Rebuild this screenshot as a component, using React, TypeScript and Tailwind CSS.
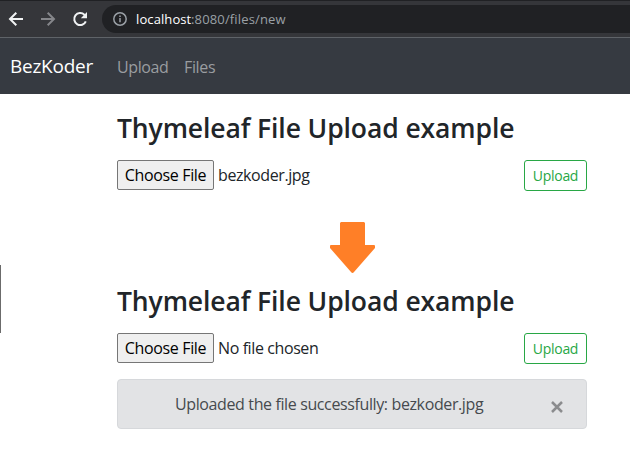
const sans = "font-['Open_Sans','Noto_Sans',sans-serif]";

function BrowserBar() {
  return (
    <div className="flex h-[38px] items-center border-t border-b border-t-[#202124] border-b-[#5f6368] bg-[#35363a]">
      <svg className="ml-2 h-4 w-4 shrink-0" viewBox="0 0 16 16" fill="none" stroke="#f1f3f4" strokeWidth="2">
        <path d="M15 8H2.500M8.300 1.700 2 8l6.300 6.300" />
      </svg>
      <svg className="ml-4 h-4 w-4 shrink-0" viewBox="0 0 16 16" fill="none" stroke="#85868a" strokeWidth="2">
        <path d="M1 8h12.500M7.700 1.700 14 8l-6.300 6.300" />
      </svg>
      <svg className="ml-4 h-4 w-4 shrink-0" viewBox="0 0 16 16" fill="none">
        <path d="M13.800 10.300A6 6 0 1 1 12.400 3.700L14 5.400" stroke="#f1f3f4" strokeWidth="2" />
        <path d="M15 1v6.200H8.800z" fill="#f1f3f4" />
      </svg>
      <div className="ml-[14px] flex h-7 flex-1 items-center rounded-l-full bg-[#202124] pl-[11px]">
        <svg className="h-[14px] w-[14px]" viewBox="0 0 14 14" fill="none" stroke="#9aa0a6" strokeWidth="1.5">
          <circle cx="7" cy="7" r="6.2" />
          <path d="M7 6v4.200M7 3.400v1.500" />
        </svg>
        <span className="ml-[9px] text-[13px] leading-7 whitespace-nowrap text-[#9aa0a6]">
          <span className="inline-block w-[55px] tracking-[0.1px] text-white">localhost</span>
          <span className="tracking-[0.15px]">:8080/files/new</span>
        </span>
      </div>
    </div>
  );
}

function NavBar() {
  return (
    <nav className="flex h-14 items-center bg-[#363a41] pl-[10px] whitespace-nowrap">
      <span className="w-[107px] pt-px text-[19px] tracking-[-0.25px] text-white">BezKoder</span>
      <span className="w-[67px] pt-px text-[16px] tracking-[-0.4px] text-[#9a9da0]">Upload</span>
      <span className="pt-px text-[16px] tracking-[-0.35px] text-[#9a9da0]">Files</span>
    </nav>
  );
}

function UploadForm({ file }: { file: string }) {
  return (
    <section className="whitespace-nowrap">
      <h3 className="h-[34px] text-[26.5px] leading-[34px] font-semibold tracking-[-0.1px] text-[#212529]">
        Thymeleaf File Upload example
      </h3>
      <div className="mt-[15px] flex h-[31px] items-start justify-between">
        <div className="flex items-center text-[16px] text-[#212529]">
          <button className="h-[30px] w-[97px] rounded-[2px] border border-[#767676] bg-[#efefef] text-[16px] leading-[28px] tracking-[-0.35px] text-black">
            Choose File
          </button>
          <span className="ml-1 tracking-[-0.4px]">{file}</span>
        </div>
        <button className="h-[31px] w-[63px] rounded-[3px] border border-[#28a745] text-[14px] leading-[29px] tracking-[-0.3px] text-[#28a745]">
          Upload
        </button>
      </div>
    </section>
  );
}

export default function App() {
  return (
    <div className={`relative h-[450px] w-[630px] overflow-hidden bg-white ${sans}`}>
      <BrowserBar />
      <NavBar />
      <main className="ml-[117px] w-[470px] pt-[17px]">
        <UploadForm file="bezkoder.jpg" />
        <svg className="mt-[31px] ml-[213px] h-[51px] w-[45px]" viewBox="0 0 45 51" fill="#ff7f27">
          <path d="M11 0h23l1 1v22h9q1 0 1 1v2L24 50q-1.500 2-3 0L0 26v-2q0-1 1-1h9V1z" />
        </svg>
        <div className="mt-[11px]">
          <UploadForm file="No file chosen" />
        </div>
        <div className="mt-[15px] flex h-[50px] items-center rounded border border-[#d6d8db] bg-[#e2e3e5] pl-[57px] whitespace-nowrap">
          <span className="w-[376px] text-[16px] tracking-[-0.38px] text-[#464a4e]">
            Uploaded the file successfully: bezkoder.jpg
          </span>
          <svg className="mt-[5px] h-3 w-3" viewBox="0 0 12 12" stroke="#8b8c8e" strokeWidth="2.5">
            <path d="m1 1 10 10M11 1 1 11" />
          </svg>
        </div>
      </main>
      <div className="absolute top-[265px] left-0 h-[68px] w-px bg-[#6b6b6b]" />
    </div>
  );
}
